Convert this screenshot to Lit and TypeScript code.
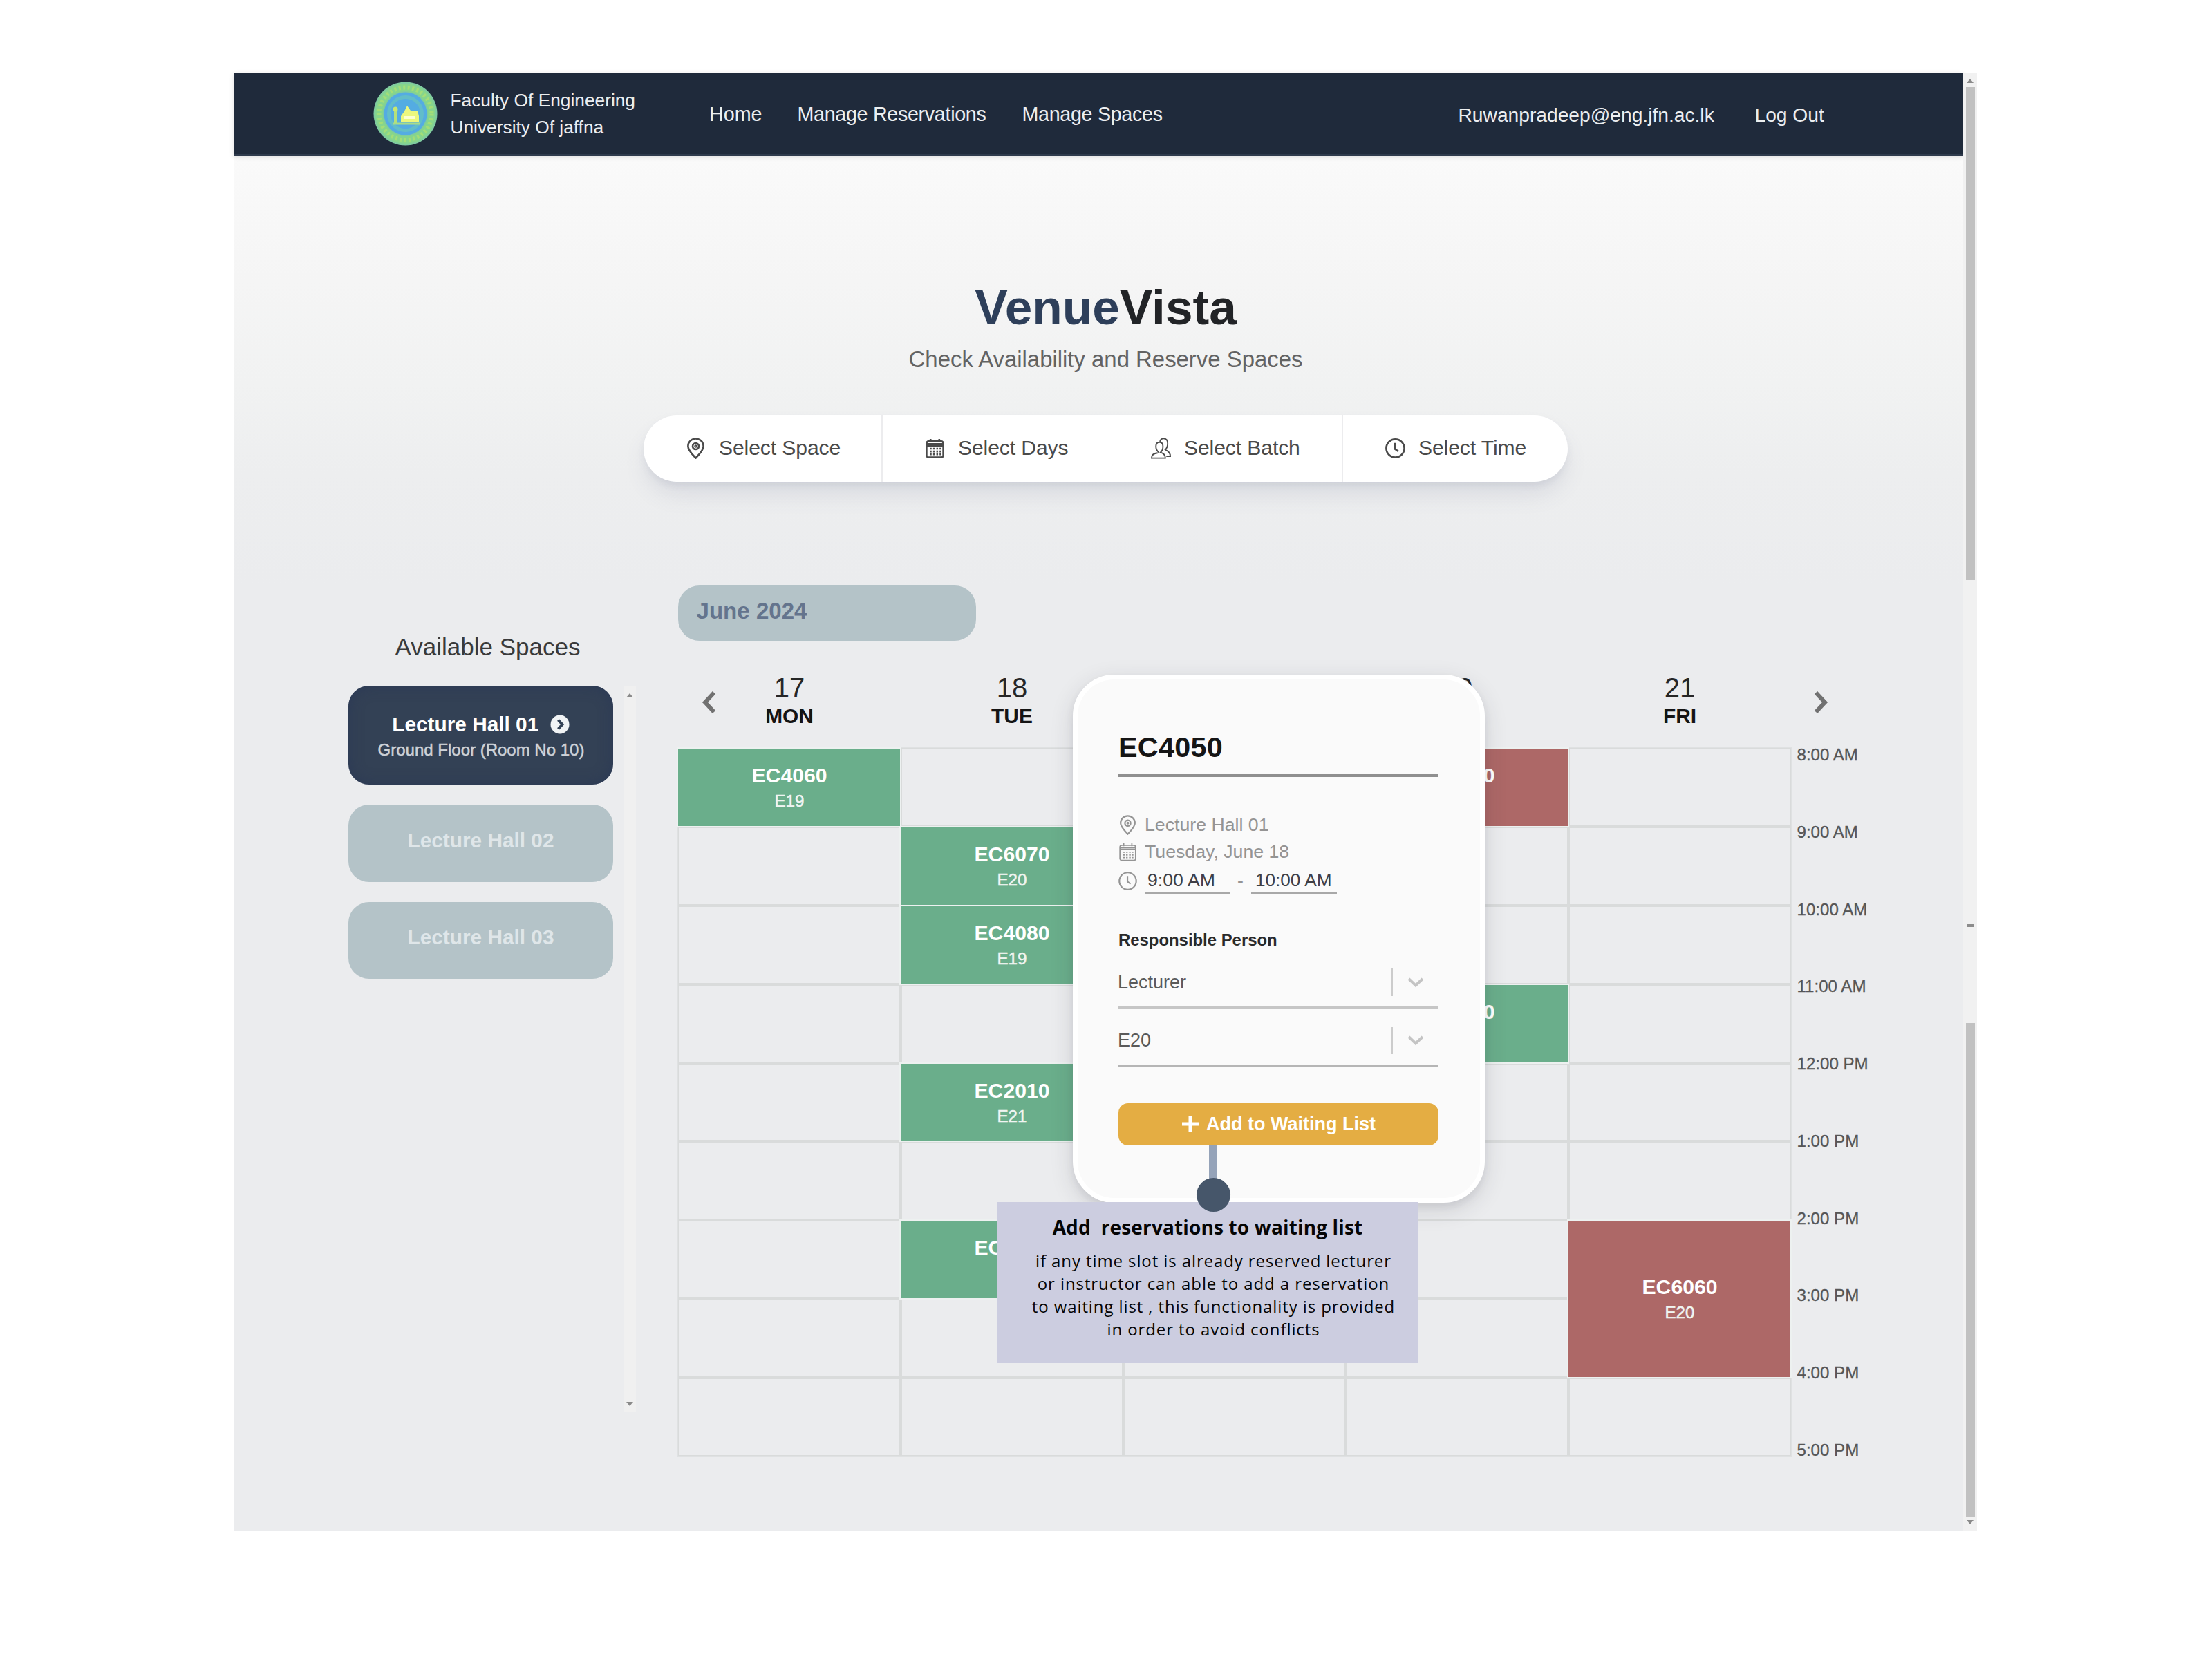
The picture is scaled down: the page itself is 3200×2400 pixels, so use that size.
import { LitElement, html, css, svg } from "lit";
import { customElement } from "lit/decorators.js";
import { classMap } from "lit/directives/class-map.js";
import { styleMap } from "lit/directives/style-map.js";

interface Reservation {
  code: string;
  batch: string;
  day: number;
  start: number;
  hours: number;
  tone: "green" | "red";
}

const DAYS = [
  { date: "17", name: "MON" },
  { date: "18", name: "TUE" },
  { date: "19", name: "WED" },
  { date: "20", name: "THU" },
  { date: "21", name: "FRI" },
];

const TIMES = [
  "8:00 AM", "9:00 AM", "10:00 AM", "11:00 AM", "12:00 PM",
  "1:00 PM", "2:00 PM", "3:00 PM", "4:00 PM", "5:00 PM",
];

const RESERVATIONS: Reservation[] = [
  { code: "EC4060", batch: "E19", day: 1, start: 1, hours: 1, tone: "green" },
  { code: "EC6070", batch: "E20", day: 2, start: 2, hours: 1, tone: "green" },
  { code: "EC4080", batch: "E19", day: 2, start: 3, hours: 1, tone: "green" },
  { code: "EC2010", batch: "E21", day: 2, start: 5, hours: 1, tone: "green" },
  { code: "EC4060", batch: "E19", day: 2, start: 7, hours: 1, tone: "green" },
  { code: "EC6060", batch: "E20", day: 4, start: 1, hours: 1, tone: "red" },
  { code: "EC4060", batch: "E19", day: 4, start: 4, hours: 1, tone: "green" },
  { code: "EC6060", batch: "E20", day: 5, start: 7, hours: 2, tone: "red" },
];

const pinIcon = svg`
  <path d="M16 30.500C12.500 26.500 4.500 19.500 4.500 12.800a11.500 11.300 0 0 1 23 0C27.500 19.500 19.500 26.500 16 30.500Z"/>
  <circle cx="16" cy="13" r="4.600"/>
  <circle cx="16" cy="13" r="1"/>`;

const calendarIcon = svg`
  <rect x="3.500" y="5.500" width="25" height="24" rx="3"/>
  <path d="M3.500 12H28.500M3.500 9.500H28.500M9.500 2V7M22.500 2V7"/>
  <path stroke-dasharray="2.600 2.200" d="M8.500 16.500H25M8.500 20.800H25M8.500 25H25"/>`;

const clockIcon = svg`
  <circle cx="16" cy="16" r="13.500"/>
  <path d="M15.500 8V17L20.500 20.500"/>`;

const usersIcon = svg`
  <path d="M13 22.500C10.500 20.500 8.500 17.500 8.500 13.500C8.500 9 11 7 13.800 7S19 9 19 13.500C19 17.500 17.500 20.500 15.500 22C19 23.500 22.500 25 22.500 30.500H2C2 25.500 5 23.500 11 23"/>
  <path d="M14.500 6C15 3.500 17 1.500 20 1.500C23.500 1.500 26 4 26 9C26 13 24.500 16 22.500 18C26 20 30 22 30 28H24"/>`;

@customElement("app-root")
export class AppRoot extends LitElement {
  static styles = css`
    :host {
      display: block;
      box-sizing: border-box;
      width: 3200px;
      height: 2400px;
      padding: 105px 0 0 338px;
      overflow: hidden;
      background: #fff;
      font-family: "Liberation Sans", Arial, sans-serif;
      white-space: nowrap;
    }
    * { box-sizing: border-box; margin: 0; }
    svg { display: block; flex: none; fill: none; }
    .window {
      position: relative;
      display: flex;
      width: 2522px;
      height: 2110px;
    }
    .page {
      width: 2502px;
      background: linear-gradient(#fafafa 119px, #f5f5f5 300px, #f1f2f2 450px, #edeeef 580px, #ebecee 740px, #ebecee);
    }

    /* top bar */
    .topbar {
      display: grid;
      grid-template-columns: 486px 127.500px 325px 631px 429px auto;
      align-items: center;
      height: 119.500px;
      padding-left: 202px;
      background: #1f2a3b;
      border-bottom: 2px solid #2e3a4c;
      color: #eceef0;
      font-size: 28.700px;
      box-shadow: 0 2px 7px rgba(0, 0, 0, 0.12);
    }
    .brand { display: flex; align-items: center; gap: 18.500px; font-size: 26.300px; line-height: 39px; padding-top: 2px; }
    .nav { padding-top: 3px; letter-spacing: -0.320px; }
    .nav.home { letter-spacing: 0; }
    .account { font-size: 28.200px; padding-top: 5px; }

    /* hero */
    .hero {
      display: flex;
      flex-direction: column;
      align-items: center;
      padding: 180.500px 0 0 21px;
    }
    .title { font-size: 71.200px; line-height: 80px; font-weight: 700; color: #222427; }
    .title-accent { color: #2e3f5a; }
    .subtitle { margin-top: 15px; font-size: 32.900px; line-height: 40px; color: #636363; }
    .filters {
      display: grid;
      grid-template-columns: 346px 327px 339px 325px;
      width: 1337px;
      height: 96.500px;
      margin-top: 60.500px;
      border-radius: 48px;
      background: #fff;
      box-shadow: 0 20px 34px -6px rgba(90, 95, 130, 0.16), 0 6px 12px -2px rgba(90, 95, 130, 0.1);
    }
    .filter {
      display: flex;
      align-items: center;
      gap: 18.500px;
      padding: 0 0 2px 59.500px;
      font-size: 30.100px;
      letter-spacing: -0.100px;
      color: #4a4a4a;
    }
    .filter svg { stroke: #4a4a4a; stroke-width: 2.700; margin-top: 2px; }
    .filter .thin { stroke-width: 1.900; }
    .divided { border-right: 2px solid #ececee; }

    /* body */
    .content { display: flex; padding: 150px 0 0 166px; }
    .sidebar { width: 415.500px; padding-top: 68.500px; }
    .side-title {
      width: 403px;
      text-align: center;
      font-size: 35px;
      line-height: 40px;
      color: #3a3a3a;
    }
    .side-body { display: flex; gap: 15.500px; margin-top: 36px; }
    .halls { display: flex; flex-direction: column; gap: 29px; width: 383px; }
    .hall {
      display: flex;
      flex-direction: column;
      align-items: center;
      justify-content: center;
      height: 111.500px;
      border-radius: 30px;
      background: #b4c3c8;
      color: #dfe6e9;
      font-size: 29.800px;
      font-weight: 700;
      padding-bottom: 8px;
    }
    .hall.active {
      height: 143.500px;
      padding: 6px 0 0;
      background: #334155;
      color: #fff;
      box-shadow: inset 0 0 20px rgba(38, 52, 86, 0.6);
    }
    .hall-name { display: flex; align-items: center; gap: 16.500px; line-height: 38px; }
    .hall-note { font-size: 24px; line-height: 36px; font-weight: 400; color: #ced2d8; padding-left: 1px; -webkit-text-stroke: 0.5px #ced2d8; }
    .side-scroll {
      display: flex;
      flex-direction: column;
      justify-content: space-between;
      align-items: center;
      width: 17px;
      height: 1050px;
      padding: 11px 0 8px;
      background: #f0f0f0;
    }

    .calendar { margin-left: 61px; }
    .month {
      width: 431px;
      height: 80px;
      padding-left: 27px;
      border-radius: 31px;
      background: #b4c3c8;
      color: #64748d;
      font-size: 33.100px;
      font-weight: 700;
      line-height: 74px;
    }
    .days {
      display: grid;
      grid-template-columns: repeat(5, 322px) 100px;
      height: 155px;
      padding-top: 48px;
    }
    .day { grid-row: 1; text-align: center; padding-left: 1px; }
    .date { font-size: 40px; line-height: 40px; color: #262626; }
    .dow { font-size: 29.900px; line-height: 40px; font-weight: 700; color: #141414; margin-top: 1px; }
    .arrow { grid-row: 1; margin: 24px 0 0 33px; stroke: #717171; stroke-width: 6; }
    .schedule { display: flex; align-items: flex-start; }
    .grid {
      display: grid;
      grid-template-columns: repeat(5, 322px);
      grid-template-rows: repeat(9, 113.900px);
      border: 1px solid #dfe1e2;
      margin: -1px 0 0 -1px;
    }
    .cell { border: 2px solid #d9dbdb; }
    .slot {
      display: flex;
      flex-direction: column;
      align-items: center;
      justify-content: center;
      margin: 1px 1px 1px 0;
      padding-top: 2px;
      box-shadow: 0 0 0 2px #edf1f0;
      color: #fff;
    }
    .slot.green { background: #6aae8b; }
    .slot.red { background: #ad6867; }
    .code { font-size: 30.200px; line-height: 38px; font-weight: 700; padding-left: 2px; }
    .batch { font-size: 24.200px; line-height: 36px; color: #f0f5f2; padding-left: 2px; -webkit-text-stroke: 0.5px #f0f5f2; }
    .times {
      display: grid;
      grid-template-rows: repeat(10, 111.750px);
      margin: -2px 0 0 8px;
      font-size: 24.100px;
      line-height: 24px;
      color: #565656;
      -webkit-text-stroke: 0.3px #565656;
    }

    /* window scrollbar */
    .scrollbar {
      display: flex;
      flex-direction: column;
      align-items: center;
      width: 20px;
      padding: 9px 0 5px;
      background: #f1f1f1;
    }
    .thumb { width: 13px; background: #c1c1c1; }
    .thumb.upper { height: 713px; margin-top: 6px; }
    .thumb.lower { height: 714px; margin: 139px 0 5px; }
    .tick { width: 11px; height: 4px; margin-top: 498px; background: #8c8c8c; }
    .scroll-arrow { fill: #8a8a8a; }

    /* reservation popup */
    .popup {
      position: absolute;
      left: 1214px;
      top: 871px;
      width: 596px;
      height: 764px;
      padding: 77.500px 60px 0 59px;
      border: 7px solid #fff;
      border-radius: 60px;
      background: #fafafa;
      box-shadow: 0 10px 34px rgba(40, 44, 60, 0.14), 0 6px 12px rgba(40, 44, 60, 0.08);
    }
    .popup-title {
      height: 63.500px;
      border-bottom: 4.500px solid #8f8f8f;
      font-size: 41.300px;
      line-height: 40px;
      font-weight: 700;
      letter-spacing: 0.3px;
      color: #151515;
    }
    .details { display: grid; grid-template-rows: 38px 40px 44px; margin-top: 50px; }
    .detail { display: flex; align-items: center; gap: 10px; font-size: 26.700px; color: #949494; }
    .detail svg { stroke: #949494; stroke-width: 2.400; margin-left: -1px; }
    .detail .thin { stroke-width: 1.900; }
    .time {
      width: 124px;
      height: 38px;
      padding-left: 4px;
      border-bottom: 3px solid #a8a8a8;
      line-height: 36px;
      font-size: 26.700px;
      color: #3f3f46;
      margin-top: -1px;
    }
    .time.end { padding-left: 6px; margin-left: 1px; font-size: 26.200px; }
    .label { margin-top: 49px; font-size: 23.900px; line-height: 30px; font-weight: 700; color: #2a2a2a; }
    .select {
      display: flex;
      align-items: center;
      height: 83px;
      padding-top: 10px;
      font-size: 27px;
      color: #5a5a5a;
    }
    .select.first { height: 85px; border-bottom: 4px solid #c6c6c6; }
    .select.last { border-bottom: 3.500px solid #b5b5b5; }
    .select-value { width: 394px; margin-left: -1px; padding-top: 1px; }
    .select-sep { width: 2.500px; height: 40px; margin: 0 21px 0 1px; background: #ccc; }
    .chev { stroke: #c4c4c4; stroke-width: 4; }
    .waitlist {
      display: flex;
      align-items: center;
      gap: 10px;
      width: 463px;
      height: 61px;
      margin-top: 52.500px;
      padding-left: 91px;
      border-radius: 14px;
      background: #e4ad43;
      color: #fff;
      font-size: 27px;
      font-weight: 700;
    }
    .waitlist svg { stroke: #fff; stroke-width: 5; }

    /* annotation */
    .stem { position: absolute; left: 1411px; top: 1551px; width: 12px; height: 60px; background: #95a3b9; }
    .dot { position: absolute; left: 1392.500px; top: 1599px; width: 49px; height: 49px; border-radius: 50%; background: #46566a; }
    .note {
      position: absolute;
      left: 1104px;
      top: 1634px;
      width: 610px;
      height: 233px;
      padding-top: 16px;
      background: #cccde0;
      color: #050505;
      text-align: center;
      font-family: "Open Sans", "Noto Sans", sans-serif;
    }
    .note-title { font-size: 28px; line-height: 40px; font-weight: 700; letter-spacing: 0.150px; white-space: pre; }
    .note-body { padding-left: 17px; margin-top: 11.500px; font-size: 24px; line-height: 33.300px; letter-spacing: 0.900px; }
  `;

  private icon(shape: unknown, size: number, thin = false) {
    return html`<svg class=${classMap({ thin })} width=${size} height=${size} viewBox="0 0 32 32">${shape}</svg>`;
  }

  private logo() {
    return html`<svg width="93" height="93" viewBox="0 0 93 93">
      <circle cx="46.500" cy="46.500" r="46" fill="#7fcba0" />
      <circle cx="46.500" cy="46.500" r="38" stroke="#86d58c" stroke-width="11" />
      <circle cx="46.500" cy="46.500" r="38" stroke="#a4de78" stroke-width="6" stroke-dasharray="3 3.500" />
      <circle cx="46.500" cy="46.500" r="31" fill="#54ace2" />
      <circle cx="46.500" cy="46.500" r="24" stroke="#62bdc9" stroke-width="5" />
      <path d="M28 61H67" stroke="#a8dc8a" stroke-width="3" />
      <path d="M32 38V60" stroke="#b4e07a" stroke-width="4" />
      <circle cx="32" cy="40" r="3.500" fill="#c6e86f" />
      <path d="M40 58V50L45 43L49 35L54 42H64L66 50V58Z" fill="#ecf77d" />
      <path d="M45 52H60" stroke="#fcffd0" stroke-width="4" />
    </svg>`;
  }

  private reservation(r: Reservation) {
    return html`<div
      class=${classMap({ slot: true, [r.tone]: true })}
      style=${styleMap({ gridColumn: `${r.day}`, gridRow: `${r.start} / span ${r.hours}` })}
    >
      <div class="code">${r.code}</div>
      <div class="batch">${r.batch}</div>
    </div>`;
  }

  private cells() {
    return Array.from({ length: 45 }, (_, i) => html`<div
      class="cell"
      style=${styleMap({ gridColumn: `${(i % 5) + 1}`, gridRow: `${Math.floor(i / 5) + 1}` })}
    ></div>`);
  }

  private scrollArrow(up: boolean) {
    return html`<svg class="scroll-arrow" width="10" height="6" viewBox="0 0 10 6">
      <path d=${up ? "M0 6L5 0L10 6Z" : "M0 0L5 6L10 0Z"} />
    </svg>`;
  }

  private select(value: string, position: "first" | "last") {
    return html`<div class="select ${position}">
      <span class="select-value">${value}</span>
      <span class="select-sep"></span>
      <svg class="chev" width="24" height="16" viewBox="0 0 24 16"><path d="M2 3L12 12.500L22 3" /></svg>
    </div>`;
  }

  render() {
    return html`
      <div class="window">
        <div class="page">
          <header class="topbar">
            <div class="brand">
              ${this.logo()}
              <div>
                <div>Faculty Of Engineering</div>
                <div>University Of jaffna</div>
              </div>
            </div>
            <a class="nav home">Home</a>
            <a class="nav">Manage Reservations</a>
            <a class="nav">Manage Spaces</a>
            <a class="account">Ruwanpradeep@eng.jfn.ac.lk</a>
            <a class="account">Log Out</a>
          </header>

          <section class="hero">
            <h1 class="title"><span class="title-accent">Venue</span>Vista</h1>
            <p class="subtitle">Check Availability and Reserve Spaces</p>
            <div class="filters">
              <div class="filter divided">${this.icon(pinIcon, 31)}<span>Select Space</span></div>
              <div class="filter">${this.icon(calendarIcon, 31)}<span>Select Days</span></div>
              <div class="filter divided">${this.icon(usersIcon, 31, true)}<span>Select Batch</span></div>
              <div class="filter">${this.icon(clockIcon, 31)}<span>Select Time</span></div>
            </div>
          </section>

          <section class="content">
            <aside class="sidebar">
              <div class="side-title">Available Spaces</div>
              <div class="side-body">
                <div class="halls">
                  <div class="hall active">
                    <div class="hall-name">
                      Lecture Hall 01
                      <svg width="28" height="28" viewBox="0 0 28 28">
                        <circle cx="14" cy="14" r="13.500" fill="#f1f3f5" />
                        <path d="M11.500 7.500L17.500 14L11.500 20.500" stroke="#334155" stroke-width="4" />
                      </svg>
                    </div>
                    <div class="hall-note">Ground Floor (Room No 10)</div>
                  </div>
                  <div class="hall">Lecture Hall 02</div>
                  <div class="hall">Lecture Hall 03</div>
                </div>
                <div class="side-scroll">${this.scrollArrow(true)}${this.scrollArrow(false)}</div>
              </div>
            </aside>

            <div class="calendar">
              <div class="month">June 2024</div>
              <div class="days">
                ${DAYS.map((d, i) => html`<div class="day" style=${styleMap({ gridColumn: `${i + 1}` })}>
                  <div class="date">${d.date}</div>
                  <div class="dow">${d.name}</div>
                </div>`)}
                <svg class="arrow" style=${styleMap({ gridColumn: "1" })} width="22" height="34" viewBox="0 0 22 34">
                  <path d="M19 3L6 17L19 31" />
                </svg>
                <svg class="arrow" style=${styleMap({ gridColumn: "6" })} width="22" height="34" viewBox="0 0 22 34">
                  <path d="M3 3L16 17L3 31" />
                </svg>
              </div>
              <div class="schedule">
                <div class="grid">${this.cells()}${RESERVATIONS.map((r) => this.reservation(r))}</div>
                <div class="times">${TIMES.map((t) => html`<div>${t}</div>`)}</div>
              </div>
            </div>
          </section>
        </div>

        <div class="scrollbar">
          ${this.scrollArrow(true)}
          <div class="thumb upper"></div>
          <div class="tick"></div>
          <div class="thumb lower"></div>
          ${this.scrollArrow(false)}
        </div>

        <div class="popup">
          <div class="popup-title">EC4050</div>
          <div class="details">
            <div class="detail">${this.icon(pinIcon, 29)}<span>Lecture Hall 01</span></div>
            <div class="detail">${this.icon(calendarIcon, 29, true)}<span>Tuesday, June 18</span></div>
            <div class="detail">
              ${this.icon(clockIcon, 29)}
              <span class="time">9:00 AM</span><span>-</span><span class="time end">10:00 AM</span>
            </div>
          </div>
          <div class="label">Responsible Person</div>
          ${this.select("Lecturer", "first")}
          ${this.select("E20", "last")}
          <div class="waitlist">
            <svg width="26" height="26" viewBox="0 0 26 26"><path d="M13 1V25M1 13H25" /></svg>
            <span>Add to Waiting List</span>
          </div>
        </div>

        <div class="note">
          <div class="note-title">Add  reservations to waiting list</div>
          <div class="note-body">
            if any time slot is already reserved lecturer<br />
            or instructor can able to add a reservation<br />
            to waiting list , this functionality is provided<br />
            in order to avoid conflicts
          </div>
        </div>
        <div class="stem"></div>
        <div class="dot"></div>
      </div>
    `;
  }
}
